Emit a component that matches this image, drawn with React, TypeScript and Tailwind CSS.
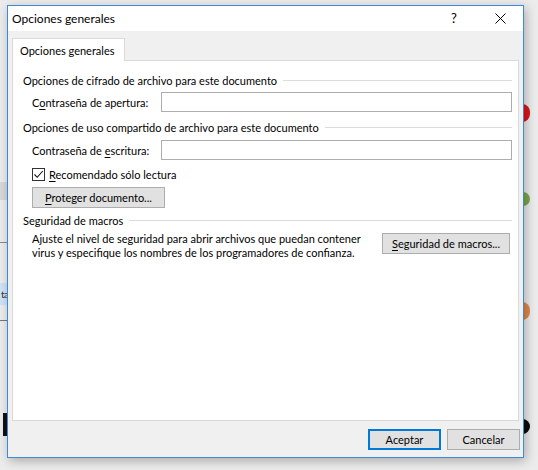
export default function App() {
  return (
    <div className="relative w-[538px] h-[470px] overflow-hidden bg-[#ececec] text-[11px] text-black font-['Segoe_UI','Lato',sans-serif] leading-none">
      {/* background pieces partly hidden behind the dialog */}
      <div className="absolute left-0 top-[182px] w-[8px] h-[18px] bg-[#d8d8d8]" />
      <div className="absolute left-0 top-[242px] w-[8px] h-px bg-[#8a8a8a]" />
      <div className="absolute left-0 top-[283px] w-[8px] h-[22px] bg-[#cfe3f6] flex items-center text-[10px] text-[#333]">
        <span className="pl-[1px] tracking-[-0.5px]">ta</span>
      </div>
      <div className="absolute left-0 top-[320px] w-[8px] h-px bg-[#777]" />
      <div className="absolute left-[3px] top-[413px] w-[4px] h-[23px] bg-[#111]" />
      <div className="absolute left-[514px] top-[104px] w-[16px] h-[18px] rounded-full bg-[#e0141b]" />
      <div className="absolute left-[514px] top-[192px] w-[16px] h-[14px] rounded-full bg-[#7aa84a]" />
      <div className="absolute left-[514px] top-[302px] w-[16px] h-[18px] rounded-full bg-[#e3894a]" />
      <div className="absolute left-[514px] top-[419px] w-[16px] h-[15px] rounded-full bg-[#0a0a0a]" />

      {/* dialog */}
      <div className="relative z-10 ml-[7px] mt-[5px] w-[517px] h-[453px] border border-[#3d8bd8] bg-[#f0f0f0] flex flex-col shadow-[2px_3px_10px_rgba(0,0,0,0.28)]">
        {/* title bar */}
        <div className="h-[25px] bg-white flex items-center pl-[4px] shrink-0 text-[12px]">
          <span className="whitespace-nowrap">Opciones generales</span>
          <div className="flex-1" />
          <span className="w-[8px] text-center mr-[37px] text-[13px]">?</span>
          <svg width="11" height="11" viewBox="0 0 11 11" className="mr-[17px]">
            <path d="M0.5 0.5 L10.5 10.5 M10.5 0.5 L0.5 10.5" stroke="#000" strokeWidth="1" fill="none" />
          </svg>
        </div>

        {/* tab strip */}
        <div className="flex pl-[4px] pt-[7px] shrink-0">
          <div className="relative z-10 -mb-px h-[23px] w-[113px] bg-white border-t border-l border-r border-[#d9d9d9] flex items-center pl-[7px]">
            <span className="whitespace-nowrap">Opciones generales</span>
          </div>
        </div>

        {/* tab panel */}
        <div className="mx-[4px] h-[361px] bg-white border border-[#d9d9d9] flex flex-col pr-[6px] shrink-0">
          <div className="mt-[11px] h-[16px] flex items-center pl-[10px]">
            <span className="whitespace-nowrap">Opciones de cifrado de archivo para este documento</span>
            <div className="flex-1 h-px bg-[#dcdcdc] ml-[6px]" />
          </div>
          <div className="mt-[4px] h-[20px] flex items-center pl-[19px]">
            <span className="w-[129px] whitespace-nowrap">
              C<span className="underline underline-offset-[2px]">o</span>ntraseña de apertura:
            </span>
            <div className="flex-1 h-[20px] border border-[#adadad] bg-white" />
          </div>

          <div className="mt-[7px] h-[16px] flex items-center pl-[10px]">
            <span className="whitespace-nowrap">Opciones de uso compartido de archivo para este documento</span>
            <div className="flex-1 h-px bg-[#dcdcdc] ml-[6px]" />
          </div>
          <div className="mt-[5px] h-[20px] flex items-center pl-[19px]">
            <span className="w-[129px] whitespace-nowrap">
              Contraseña de <span className="underline underline-offset-[2px]">e</span>scritura:
            </span>
            <div className="flex-1 h-[20px] border border-[#adadad] bg-white" />
          </div>

          <div className="mt-[8px] h-[13px] flex items-center pl-[19px]">
            <div className="w-[13px] h-[13px] border border-[#333] bg-white flex items-center justify-center">
              <svg width="11" height="11" viewBox="0 0 11 11">
                <path d="M1.5 5.5 L4.2 8.3 L9.8 2" stroke="#111" strokeWidth="1.1" fill="none" />
              </svg>
            </div>
            <span className="ml-[4px] whitespace-nowrap">
              <span className="underline underline-offset-[2px]">R</span>ecomendado sólo lectura
            </span>
          </div>

          <div className="mt-[6px] pl-[19px] flex">
            <button className="w-[133px] h-[21px] bg-[#e1e1e1] border border-[#adadad] flex items-center justify-center whitespace-nowrap">
              <span><span className="underline underline-offset-[2px]">P</span>roteger documento...</span>
            </button>
          </div>

          <div className="mt-[4px] h-[16px] flex items-center pl-[10px]">
            <span className="whitespace-nowrap">Seguridad de macros</span>
            <div className="flex-1 h-px bg-[#dcdcdc] ml-[6px]" />
          </div>
          <div className="mt-[4px] flex items-start pl-[19px]">
            <p className="leading-[14px] whitespace-nowrap">
              Ajuste el nivel de seguridad para abrir archivos que puedan contener
              <br />
              virus y especifique los nombres de los programadores de confianza.
            </p>
            <div className="flex-1" />
            <button className="mt-[1px] mr-[2px] w-[128px] h-[21px] bg-[#e1e1e1] border border-[#adadad] flex items-center justify-center whitespace-nowrap">
              <span><span className="underline underline-offset-[2px]">S</span>eguridad de macros...</span>
            </button>
          </div>
        </div>

        {/* footer */}
        <div className="flex justify-end pt-[8px] pr-[3px] gap-[6px]">
          <button className="w-[73px] h-[21px] bg-[#e1e1e1] border-2 border-[#0078d7] flex items-center justify-center">
            Aceptar
          </button>
          <button className="w-[73px] h-[21px] bg-[#e1e1e1] border border-[#adadad] flex items-center justify-center">
            Cancelar
          </button>
        </div>
      </div>
    </div>
  );
}
